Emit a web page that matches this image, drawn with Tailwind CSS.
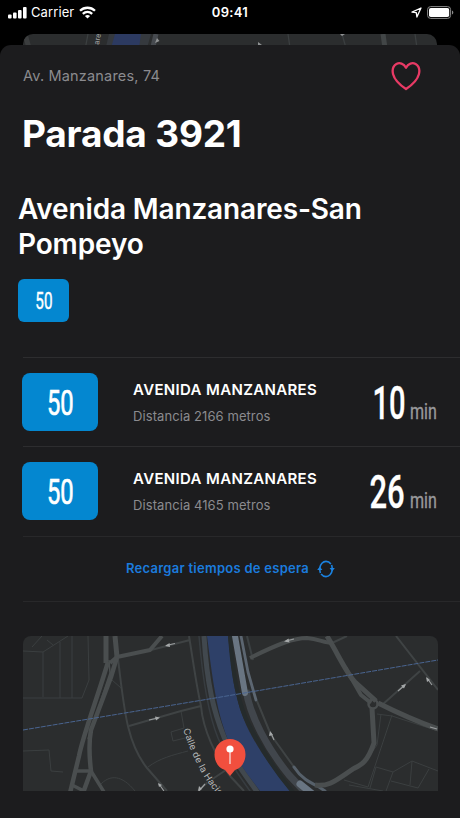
<!DOCTYPE html>
<html lang="es">
<head>
  <meta charset="UTF-8">
  <meta name="viewport" content="width=device-width, initial-scale=1.0">
  <title>Parada 3921</title>
  <script src="https://cdn.jsdelivr.net/npm/@tailwindcss/browser@4"></script>
</head>
<body class="bg-black font-['Inter',sans-serif] text-white w-[460px] h-[818px] overflow-hidden flex flex-col">

  <!-- Status bar -->
  <header class="h-[34px] shrink-0 grid grid-cols-3 items-start pt-1 pl-2 pr-[6px]">
    <div class="flex items-center h-4">
      <svg class="w-[19px] h-[13px]" viewBox="0 0 19 13" fill="white">
        <rect x="0" y="8.5" width="3.6" height="4" rx="1"/>
        <rect x="5" y="6.5" width="3.6" height="6" rx="1"/>
        <rect x="10" y="4" width="3.6" height="8.5" rx="1"/>
        <rect x="15" y="1" width="3.6" height="11.5" rx="1"/>
      </svg>
      <span class="ml-[4px] text-[13px] tracking-[0.1px] leading-4">Carrier</span>
      <svg class="ml-[5px] w-[17px] h-[13px]" viewBox="0 0 17 13" fill="none" stroke="white" stroke-width="2.3">
        <path d="M1 4.8 C5.2 .7 11.8 .7 16 4.8"/>
        <path d="M3.8 7.8 C6.6 5.3 10.4 5.3 13.2 7.8"/>
        <path d="M8.5 12.6 L5.9 10 C7.5 8.7 9.5 8.7 11.1 10 Z" fill="white" stroke="none"/>
      </svg>
    </div>
    <div class="text-center text-[13px] font-semibold leading-4 tracking-[0.3px] pr-[2px]">09:41</div>
    <div class="flex items-center justify-end h-4">
      <svg class="w-[11px] h-[11px] mr-[5px]" viewBox="0 0 11 11" fill="none" stroke="white" stroke-width="1.3" stroke-linejoin="round">
        <path d="M10 1 L1 5.2 L5.3 5.7 L5.9 10 Z"/>
      </svg>
      <svg class="w-[27px] h-[13px]" viewBox="0 0 27 13">
        <rect x=".6" y=".6" width="23" height="11.8" rx="3" fill="none" stroke="#8a8a8a"/>
        <rect x="2" y="2" width="20.2" height="9" rx="1.8" fill="white"/>
        <path d="M25 4.5 C26.8 5.2 26.8 7.8 25 8.5 Z" fill="#8a8a8a"/>
      </svg>
    </div>
  </header>

  <!-- Previous screen, behind the sheet -->
  <div class="mx-[23px] h-[21px] shrink-0 rounded-t-[10px] overflow-hidden bg-[#2b2d2e]">
    <svg class="w-full h-full" viewBox="23 34 414 21" fill="none">
      <path d="M25 34 L31 55" stroke="#3b3d3e" stroke-width="5"/>
      <path d="M88 34 L84 55 M288 34 L291 55 M342 34 L348 55 M415 34 L418 55" stroke="#3b3f40" stroke-width="1.3"/>
      <path d="M109 34 H151 L145 55 H104 Z" fill="#35393e"/>
      <path d="M115 34 H141 L138 55 H109 Z" fill="#2c3a61"/>
      <path d="M156 34 L151 55" stroke="#464a4f" stroke-width="5"/>
      <path d="M383 34 L386 55" stroke="#424647" stroke-width="5"/>
      <path d="M157 38 L159.5 41 L155 43 Z M340 34 h5 l-3 2 Z M258 42 l4 3 h-4 Z" fill="#909394"/>
      <text x="0" y="0" transform="translate(99 45) rotate(-80)" font-size="7.5" fill="#a6a8a9">are</text>
    </svg>
  </div>

  <!-- Sheet -->
  <main class="relative -mt-[10px] flex-1 rounded-t-[11px] bg-[#1c1c1e] pt-[17px]">
    <div class="flex justify-between pl-[23px] pr-[39px] h-[29px]">
      <p class="text-[14.5px] leading-[28px] tracking-[0.18px] text-[#8b8b8f]">Av. Manzanares, 74</p>
      <svg class="w-[30px] h-[29px]" viewBox="0 0 30 29" fill="none" stroke="#e83a65" stroke-width="2.3" stroke-linejoin="round">
        <path d="M15 5.8 C12.8 1.3 8.5 .3 5.4 2 C1.9 4.1 1.2 8.6 2.1 12.2 C3.6 18 9 23 15 27 C21 23 26.4 18 27.9 12.2 C28.8 8.6 28.1 4.1 24.6 2 C21.5 .3 17.2 1.3 15 5.8 Z"/>
      </svg>
    </div>
    <h1 class="mt-[21px] pl-[22px] text-[37px] leading-[44px] font-bold tracking-[-0.2px]">Parada 3921</h1>
    <h2 class="mt-[36px] pl-[18px] pr-[60px] text-[28px] leading-[35px] font-semibold tracking-[-0.15px]">Avenida Manzanares-San Pompeyo</h2>

    <div class="mt-[17px] ml-[18px] w-[51px] h-[43px] rounded-[6px] bg-[#0487d0]">
      <svg class="w-full h-full" viewBox="0 0 51 43">
        <text transform="translate(17.3 30) scale(.65 1)" font-family="Roboto" font-size="23.5" fill="white" stroke="white" stroke-width=".4">50</text>
      </svg>
    </div>

    <section class="mt-[35px] pl-[23px]">
      <div class="h-[89px] border-t border-[#2d2d2f] flex items-start pt-[15px]">
        <div class="-ml-px w-[76px] h-[58px] shrink-0 rounded-[8px] bg-[#0487d0]">
          <svg class="w-full h-full" viewBox="0 0 76 58">
            <text transform="translate(25 42) scale(.67 1)" font-family="Roboto" font-size="35.5" fill="white" stroke="white" stroke-width=".7">50</text>
          </svg>
        </div>
        <div class="ml-[35px] pt-[6px] w-[220px]">
          <h3 class="text-[15px] leading-[22px] font-semibold tracking-[0.34px]">AVENIDA MANZANARES</h3>
          <p class="mt-[5px] text-[13px] leading-[20px] tracking-[0.08px] text-[#8b8b8f]">Distancia 2166 metros</p>
        </div>
        <svg class="w-[100px] h-[58px] overflow-visible" viewBox="353 373 100 58" font-family="Roboto">
          <text transform="translate(372.5 419) scale(.62 1)" font-weight="500" font-size="47" fill="white" stroke="white" stroke-width=".3">10</text>
          <text transform="translate(410 419) scale(.73 1)" font-size="22" fill="#98989b" stroke="#98989b" stroke-width=".4">min</text>
        </svg>
      </div>
      <div class="h-[89px] border-t border-[#2d2d2f] flex items-start pt-[15px]">
        <div class="-ml-px w-[76px] h-[58px] shrink-0 rounded-[8px] bg-[#0487d0]">
          <svg class="w-full h-full" viewBox="0 0 76 58">
            <text transform="translate(25 42) scale(.67 1)" font-family="Roboto" font-size="35.5" fill="white" stroke="white" stroke-width=".7">50</text>
          </svg>
        </div>
        <div class="ml-[35px] pt-[6px] w-[220px]">
          <h3 class="text-[15px] leading-[22px] font-semibold tracking-[0.34px]">AVENIDA MANZANARES</h3>
          <p class="mt-[5px] text-[13px] leading-[20px] tracking-[0.08px] text-[#8b8b8f]">Distancia 4165 metros</p>
        </div>
        <svg class="w-[100px] h-[58px] overflow-visible" viewBox="353 373 100 58" font-family="Roboto">
          <text transform="translate(369.5 419) scale(.66 1)" font-weight="500" font-size="47" fill="white" stroke="white" stroke-width=".3">26</text>
          <text transform="translate(410 419) scale(.73 1)" font-size="22" fill="#98989b" stroke="#98989b" stroke-width=".4">min</text>
        </svg>
      </div>
      <div class="mt-px h-[66px] border-y border-[#28282a] flex items-center justify-center pr-[22px]">
        <button class="flex items-center text-[13px] font-semibold tracking-[0.27px] text-[#1b7bdd]">
          Recargar tiempos de espera
          <svg class="ml-[8px] w-[18px] h-[18px]" viewBox="0 0 18 18" fill="none" stroke="#1b82e0" stroke-width="1.6">
            <path d="M2.8 8 C3.2 4 6 1.4 9 1.4 C11 1.4 12.7 2.3 13.9 3.9"/>
            <path d="M15.2 10 C14.8 14 12 16.6 9 16.6 C7 16.6 5.3 15.7 4.1 14.1"/>
            <path d="M14.6 5 C15 6.2 15.2 7.5 15.2 9 M3.4 13 C3 11.8 2.8 10.5 2.8 9"/>
            <path d="M.2 10 L2.8 6.6 L5.4 10 Z M12.6 8 L15.2 11.4 L17.8 8 Z" fill="#1b82e0" stroke="none"/>
          </svg>
        </button>
      </div>
    </section>

    <!-- Map -->
    <div class="mt-[34px] ml-[23px] w-[415px] h-[155px] rounded-t-[8px] overflow-hidden bg-[#2b2d2e]">
      <svg class="w-full h-full" viewBox="23 636 415 155" fill="none" stroke-linejoin="round">
        <!-- plots and paths -->
        <g stroke="#3b3f40" stroke-width="1">
          <path d="M23 651 L43 652 L68 636 M32 647 L42 636 M47 640 L53 645 M43 652 V697 M60 642 V698 M72 636 V698 M88 636 L89 680 L82 698 L23 698"/>
          <path d="M23 751 L49 750 L51 771 L63 772 M100 785 C110 774 122 775 135 791 M148 767 C160 758 173 755 188 751"/>
          <path d="M181 711 L184 728 L171 732 L173 741 L185 738 M112 680 L121 688 L122 690"/>
          <path d="M392 715 L368 787 L344 780 M381 714 L377 745 L368 758 M376 767 L393 772 L412 761 L438 771 M393 772 L386 791 M391 781 L418 788 L429 769 M412 761 L410 785 M349 785 L383 791 M370 788 L376 767 M377 714 L392 716 L438 731"/>
        </g>
        <!-- side streets -->
        <g stroke="#3f4344" stroke-width="2">
          <path d="M118 659 C124 706 126 742 147 768 L167 791"/>
          <path d="M151 650 L190 640 M189 636 C193 660 196 684 201 706 C203 730 216 757 230 776 L244 791 M129 726 L181 711 L201 706"/>
          <path d="M396 636 L438 690 M420 671 L382 705 M257 701 L271 735 L294 767 M198 791 L208 782 L226 770"/>
          <path d="M332 643 L347 636"/>
        </g>
        <!-- river and banks -->
        <path d="M204 636 C207 686 214 712 224 737 C235 764 248 778 260 796" stroke="#41484e" stroke-width="5"/>
        <path d="M199 636 C203 684 209 716 218 738 C229 764 244 782 252 794" stroke="#373c40" stroke-width="1.5"/>
        <path d="M207 636 L228 636 C231 660 232 680 237 697 C242 724 260 754 290 791 L260 791 C247 774 233 756 225 732 C215 704 211 666 207 636 Z" fill="#2e4068"/>
        <path d="M230 636 C233 680 240 708 249 725 C262 751 276 772 293 792" stroke="#252b2c" stroke-width="4"/>
        <path d="M246 690 C250 716 267 748 289 775 L304 791" stroke="#41464c" stroke-width="7"/>
        <path d="M247 636 L253 660" stroke="#3c4143" stroke-width="2"/>
        <path d="M235 636 L245 693" stroke="#697582" stroke-width="6" stroke-linecap="round"/>
        <path d="M241 636 L248 672 L256 700" stroke="#5c6671" stroke-width="2.8" stroke-linecap="round"/>
        <path d="M294 767 C301 778 309 782 319 787 L325 791" stroke="#56606a" stroke-width="3" stroke-linecap="round"/>
        <path d="M300 784 L315 796" stroke="#697582" stroke-width="7" stroke-linecap="round"/>
        <!-- main roads -->
        <g stroke="#4a4e4f">
          <path d="M106 636 V663 M115 636 L117 657" stroke-width="5"/>
          <path d="M110 663 L117 657 L150 650 L162 636" stroke-width="4"/>
          <path d="M108 662 C98 696 83 735 79 756 L70 793 M117 657 L111 677 L91 730 Q88 746 91 771 L83 793" stroke-width="4.5"/>
          <path d="M77 771 H91 L104 792 M72 785 L84 791" stroke-width="3.5"/>
          <path d="M109 660 L110 673 L88 739" stroke-width="1.5"/>
          <path d="M250 658 C278 644 294 638 307 638 C319 639 324 643 332 643" stroke-width="4"/>
          <path d="M327 636 C339 656 347 674 355 682 L376 701" stroke-width="5"/>
          <path d="M345 667 L361 695 L371 703" stroke-width="4"/>
          <path d="M378 703 C394 711 410 719 438 729 M372 708 L374 743 C367 763 361 765 353 769 C335 781 329 787 315 785" stroke-width="5"/>
          <circle cx="373" cy="704" r="4.5" stroke-width="2.5"/>
        </g>
        <!-- boundary line -->
        <path d="M23 730 L215 698 L438 660" stroke="#4a6591" stroke-width="1" stroke-dasharray="5 1"/>
        <!-- one-way arrows -->
        <g stroke="#9a9d9e" stroke-width="1.2">
          <path d="M175 643.5 L166 645.5 M149 720 L158 718 M294 639 L286 641 M398 691 L405 685 M432 685 L427 678 M274 740 L271 733 M164 791 L159 784 M205 784 L199 791 M430 727 L437 729"/>
        </g>
        <path d="M165 646 l4.5 -3 l.5 4 Z M160 717.5 l-5 -1 l1 4 Z M284 641.5 l4.5 -3 l1 4 Z M406 684 l-5 1.5 l3 3 Z M426 677 l1 5 l3 -2 Z M270 731 l-1 5 l4 -1 Z M158 783 l1 4 l3 -2 Z M198 791 l1 -5 l3 3 Z" fill="#a5a8a9"/>
        <!-- street label -->
        <path id="calle" d="M183 730 C190 748 200 778 222 799"/>
        <text font-size="9.2" letter-spacing=".2" fill="#b8babb" stroke="#2b2d2e" stroke-width="1.5" paint-order="stroke"><textPath href="#calle">Calle de la Hacienda</textPath></text>
        <!-- stop pin -->
        <path d="M230 776 L225 770 C218 768 214.5 761 214.5 754.5 A15.5 15.5 0 0 1 245.5 754.5 C245.5 761 242 768 235 770 Z" fill="#f14f3e"/>
        <path d="M230 750 V764" stroke="#f6d5d0" stroke-width="1.4"/>
        <circle cx="230" cy="749" r="3.6" fill="white"/>
      </svg>
    </div>
  </main>
</body>
</html>
